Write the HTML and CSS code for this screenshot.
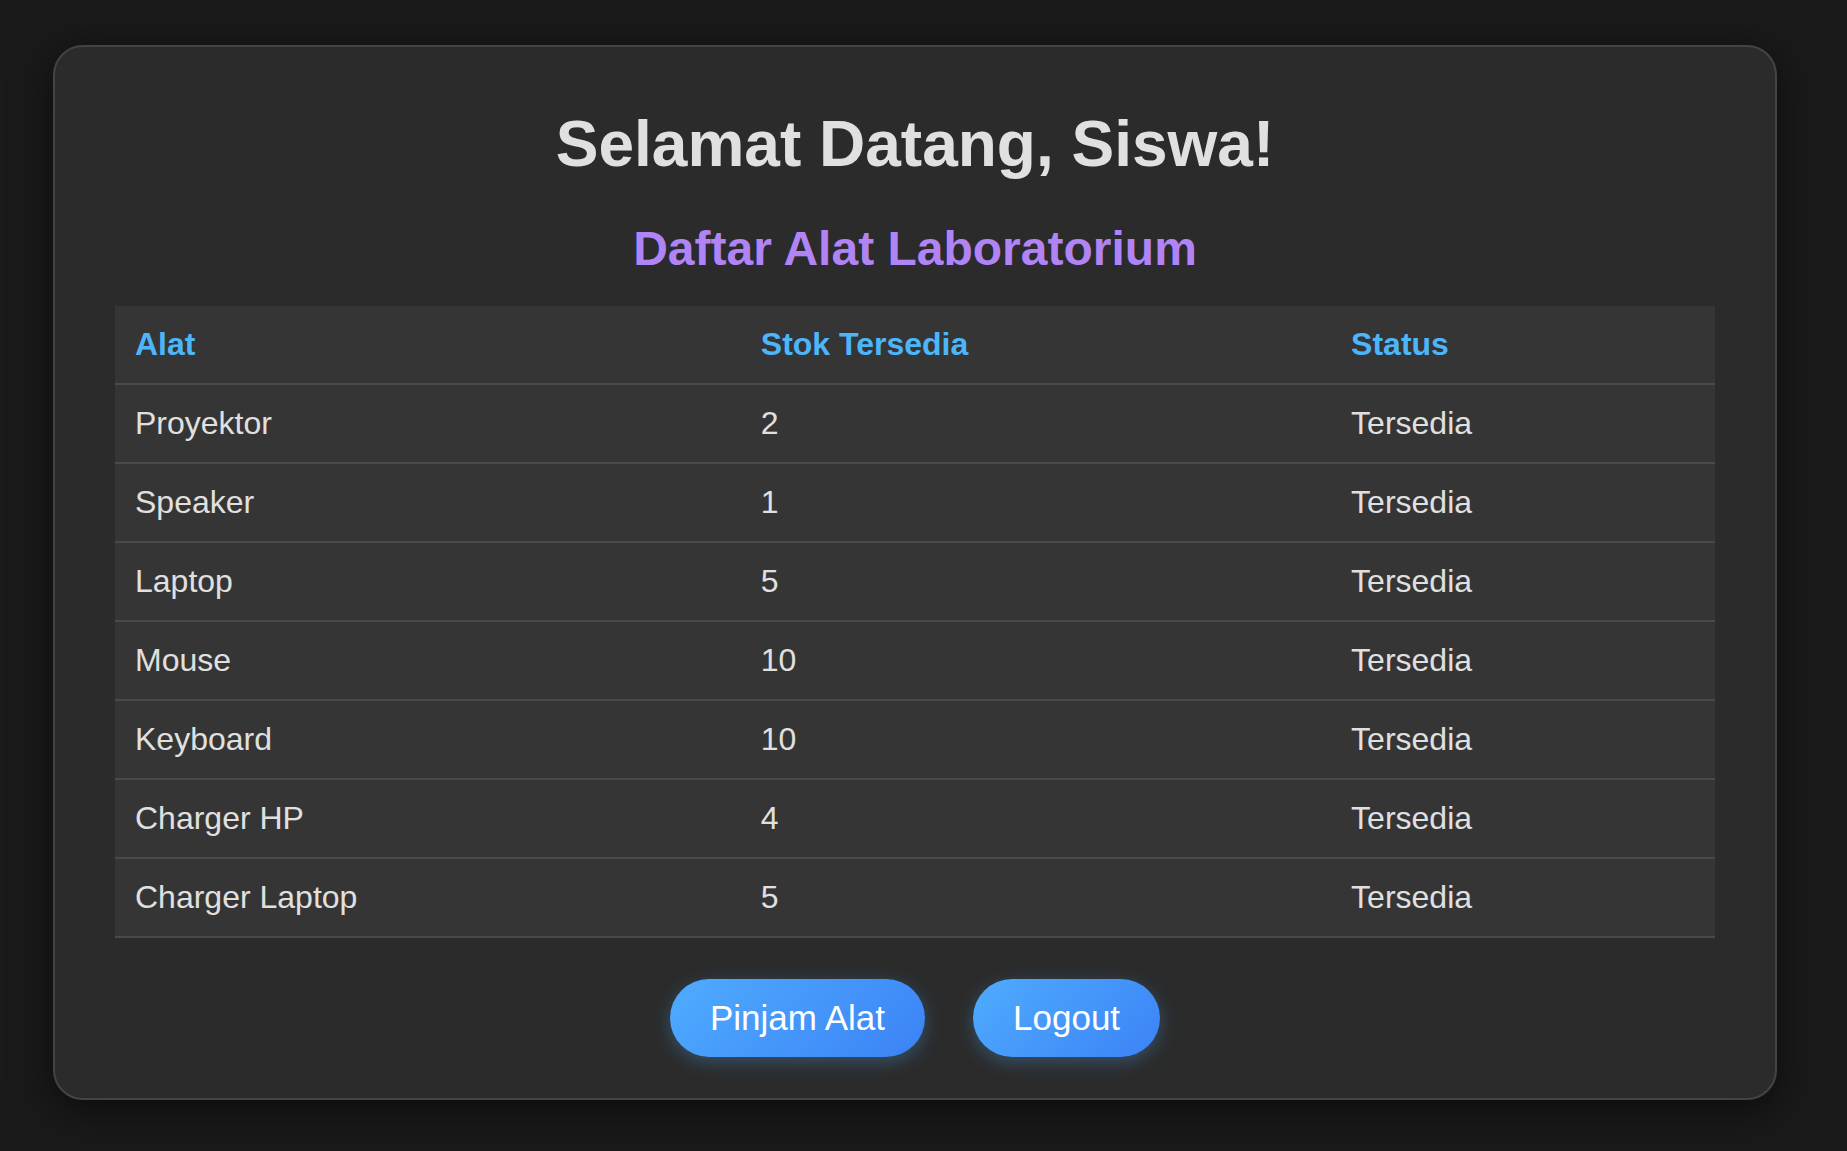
FILE: index.html
```html
<!DOCTYPE html>
<html lang="id">
<head>
<meta charset="utf-8">
<title>Dashboard Siswa</title>
<link rel="stylesheet" href="styles.css">
</head>
<body>
<div class="card">
  <h1 class="title">Selamat Datang, Siswa!</h1>
  <h2 class="subtitle">Daftar Alat Laboratorium</h2>
  <table class="tools">
    <thead>
      <tr><th>Alat</th><th>Stok Tersedia</th><th>Status</th></tr>
    </thead>
    <tbody>
      <tr><td>Proyektor</td><td>2</td><td>Tersedia</td></tr>
      <tr><td>Speaker</td><td>1</td><td>Tersedia</td></tr>
      <tr><td>Laptop</td><td>5</td><td>Tersedia</td></tr>
      <tr><td>Mouse</td><td>10</td><td>Tersedia</td></tr>
      <tr><td>Keyboard</td><td>10</td><td>Tersedia</td></tr>
      <tr><td>Charger HP</td><td>4</td><td>Tersedia</td></tr>
      <tr><td>Charger Laptop</td><td>5</td><td>Tersedia</td></tr>
    </tbody>
  </table>
  <div class="actions">
    <a class="btn" href="#">Pinjam Alat</a>
    <a class="btn" href="#">Logout</a>
  </div>
</div>
</body>
</html>
```
FILE: styles.css
```css
html, body {
  margin: 0;
  padding: 0;
}
body {
  background: #1a1a1a;
  font-family: "Liberation Sans", Arial, sans-serif;
  font-size: 32px;
  color: #e0e0e0;
  padding: 45px 0 40px 53px;
  min-height: 1151px;
  box-sizing: border-box;
}
.card {
  width: 1724px;
  box-sizing: border-box;
  background: #2b2b2b;
  border: 2px solid #444444;
  border-radius: 30px;
  padding: 60px 60px 41px;
  box-shadow: 0 10px 40px rgba(0, 0, 0, 0.55);
}
.title {
  margin: 0 0 40px;
  text-align: center;
  font-size: 64px;
  font-weight: bold;
  color: #e0e0e0;
}
.subtitle {
  margin: 0 0 30px;
  text-align: center;
  font-size: 48px;
  font-weight: bold;
  color: #b084f5;
}
.tools {
  width: 100%;
  border-collapse: collapse;
  background: #353535;
}
.tools th,
.tools td {
  padding: 20px;
  text-align: left;
  border-bottom: 2px solid #4a4a4a;
  line-height: normal;
}
.tools th {
  color: #4db5f9;
  font-weight: bold;
}
.tools td {
  color: #e0e0e0;
}
.actions {
  display: flex;
  justify-content: center;
  gap: 48px;
  margin-top: 41px;
}
.btn {
  display: inline-block;
  font-size: 35px;
  padding: 19px 40px;
  border-radius: 50px;
  color: #ffffff;
  text-decoration: none;
  background: linear-gradient(135deg, #4facfe 0%, #3b82f6 100%);
  box-shadow: 0 5px 18px rgba(79, 172, 254, 0.3);
}
```
